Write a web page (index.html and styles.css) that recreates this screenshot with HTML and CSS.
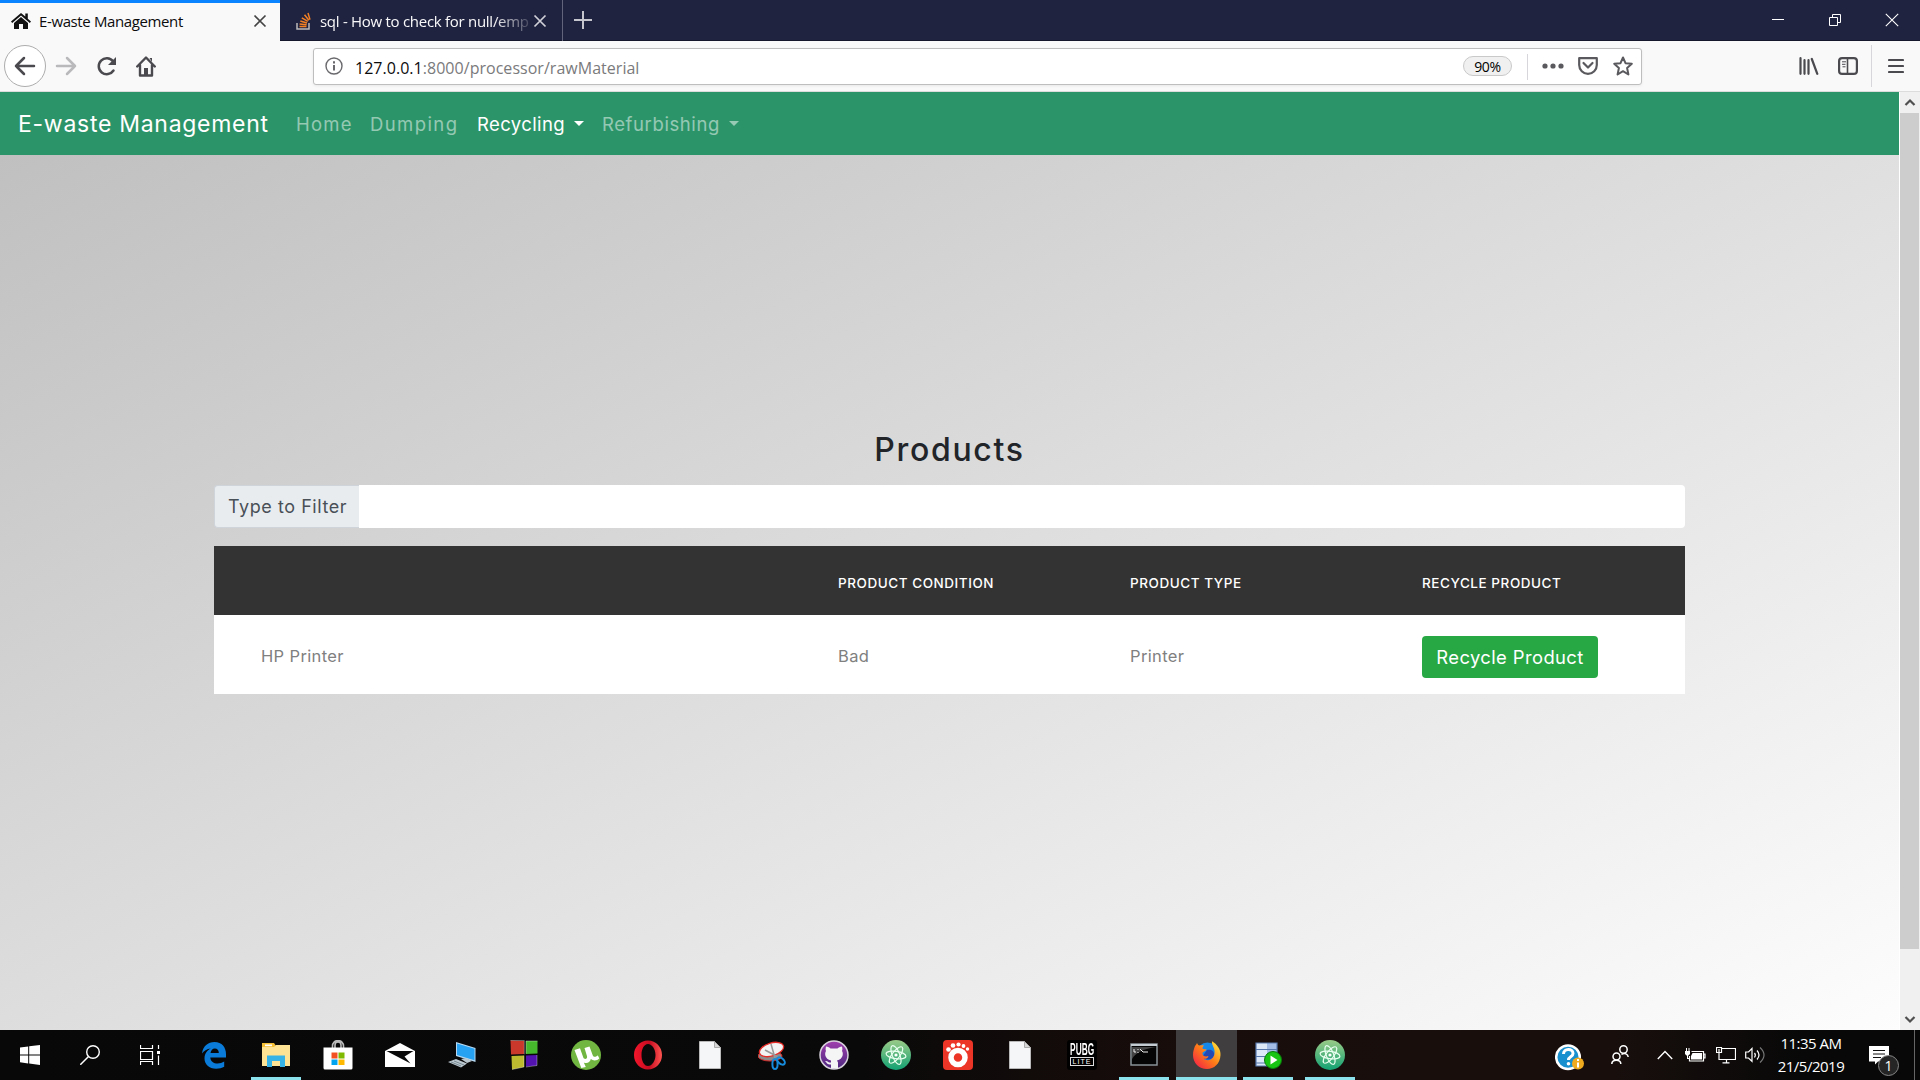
FILE: index.html
```html
<!DOCTYPE html>
<html lang="en">
<head>
<meta charset="utf-8">
<title>E-waste Management</title>
<link rel="stylesheet" href="styles.css">
</head>
<body>
<div class="screen">
  <header class="tabbar">
    <div class="tab tab-active">
      <svg class="tab-icon" width="20" height="18" viewBox="0 0 20 18"><path fill="#111" d="M10 1 0 9.6l1.2 1.3L10 3.4l8.8 7.5L20 9.6l-3.2-2.8V1.5h-2.5v3.1zM3 11v6h5v-5h4v5h5v-6l-7-6z"/></svg>
      <span class="tab-title title-one">E-waste Management</span>
      <svg class="tab-close" width="14" height="14" viewBox="0 0 14 14"><path d="M1.5 1.5l11 11m0-11l-11 11" stroke="#444" stroke-width="1.7"/></svg>
    </div>
    <div class="tab tab-idle">
      <svg class="tab-icon" width="16" height="18" viewBox="0 0 16 18"><path d="M1 11v6h12v-6" fill="none" stroke="#bcbbbb" stroke-width="1.5"/><path d="M3.5 14.5h7M3.6 12l7 .8M4.3 9l6.7 2M5.8 5.8l6 3.6M8.5 2.8l4.4 5.4M12 1l2 6.6" stroke="#f48024" stroke-width="1.5"/></svg>
      <span class="tab-title title-two">sql - How to check for null/emp</span>
      <svg class="tab-close" width="14" height="14" viewBox="0 0 14 14"><path d="M1.5 1.5l11 11m0-11l-11 11" stroke="#d0d0d8" stroke-width="1.7"/></svg>
    </div>
    <svg class="new-tab" width="18" height="18" viewBox="0 0 18 18"><path d="M9 0v18M0 9h18" stroke="#c6c6cf" stroke-width="2"/></svg>
    <div class="window-buttons">
      <svg width="14" height="14" viewBox="0 0 14 14"><path d="M1 6.5h12" stroke="#fff"/></svg>
      <svg width="14" height="14" viewBox="0 0 14 14"><path d="M1.5 4.5h8v8h-8zM4.500 4V1.500h8v8H10" fill="none" stroke="#fff"/></svg>
      <svg width="14" height="14" viewBox="0 0 14 14"><path d="M.8.8l12.400 12.400m0-12.400L.8 13.200" stroke="#fff" stroke-width="1.100"/></svg>
    </div>
  </header>

  <div class="toolbar">
    <div class="back"><svg width="22" height="20" viewBox="0 0 22 20"><path d="M10 2 2 10l8 8M2 10h18" fill="none" stroke="#4a4a4f" stroke-width="2.500" stroke-linecap="round" stroke-linejoin="round"/></svg></div>
    <svg class="tool-forward" width="22" height="20" viewBox="0 0 22 20"><path d="m12 2 8 8-8 8M20 10H2" fill="none" stroke="#b9b9bb" stroke-width="2.500" stroke-linecap="round" stroke-linejoin="round"/></svg>
    <svg class="tool-reload" width="20" height="20" viewBox="0 0 20 20"><path d="M16.500 14.500A8 8 0 1 1 16 5.200" fill="none" stroke="#4a4a4f" stroke-width="2.500" stroke-linecap="round"/><path d="M19 1v8h-8z" fill="#4a4a4f"/></svg>
    <svg class="tool-home" width="20" height="21" viewBox="0 0 20 21"><path d="m1.200 10.500 8.800-9 8.800 9M4 9v10.500h12V9" fill="none" stroke="#4a4a4f" stroke-width="2.400" stroke-linecap="round" stroke-linejoin="round"/><path d="M8 12h4v7H8zM13.500 2h2.500v4z" fill="#4a4a4f"/></svg>
    <div class="urlbar">
      <svg class="info" width="18" height="18" viewBox="0 0 18 18"><circle cx="9" cy="9" r="8" fill="none" stroke="#6a6a6e" stroke-width="1.400"/><path d="M9 8v5.500M9 4.300v2.200" stroke="#6a6a6e" stroke-width="2"/></svg>
      <span class="url"><b>127.0.0.1</b>:8000/processor/rawMaterial</span>
      <span class="zoom-level">90%</span>
      <span class="url-divider"></span>
      <svg class="dots" width="22" height="6" viewBox="0 0 22 6"><g fill="#5a5a5e"><circle cx="3" cy="3" r="2.600"/><circle cx="11" cy="3" r="2.600"/><circle cx="19" cy="3" r="2.600"/></g></svg>
      <svg class="pocket" width="20" height="18" viewBox="0 0 20 18"><path d="M1.200 1.200h17.600V8a8.800 8.800 0 0 1-17.600 0z" fill="none" stroke="#5a5a5e" stroke-width="2.200" stroke-linejoin="round"/><path d="m5.500 6 4.500 4.500L14.500 6" fill="none" stroke="#5a5a5e" stroke-width="2.200" stroke-linecap="round" stroke-linejoin="round"/></svg>
      <svg class="star" width="20" height="20" viewBox="0 0 20 20"><path d="m10 1.500 2.500 5.700 6.300.6-4.700 4.200 1.300 6.500L10 15.200l-5.400 3.300L5.900 12 1.200 7.800l6.300-.6z" fill="none" stroke="#5a5a5e" stroke-width="2" stroke-linejoin="round"/></svg>
    </div>
    <div class="tools-right">
      <svg class="library" width="20" height="18" viewBox="0 0 20 18"><path d="M1.500 1.200v15.600M5.500 3.200v13.600M9.500 3.200v13.600M12.800 2l5.500 14.800" stroke="#4a4a4f" stroke-width="2.200" stroke-linecap="round"/></svg>
      <svg class="sidebar-icon" width="20" height="18" viewBox="0 0 20 18"><rect x="1.100" y="1.100" width="17.800" height="15.800" rx="3" fill="none" stroke="#4a4a4f" stroke-width="2.200"/><path d="M9.500 2v14" stroke="#4a4a4f" stroke-width="1.600"/><path d="M4 4.800h4M4 7.300h3.500M4.500 9.800H7.500" stroke="#4a4a4f"/></svg>
      <span class="tools-divider"></span>
      <svg width="16" height="16" viewBox="0 0 16 16"><path d="M1 2h14M1 8h14M1 14h14" stroke="#4a4a4f" stroke-width="2.200" stroke-linecap="round"/></svg>
    </div>
  </div>

  <div class="viewport">
    <div class="page">
      <nav class="navbar">
        <span class="brand">E-waste Management</span>
        <span class="nav-link nav-home">Home</span>
        <span class="nav-link nav-dumping">Dumping</span>
        <span class="nav-link nav-recycling">Recycling</span><i class="caret caret-active"></i>
        <span class="nav-link nav-refurbishing">Refurbishing</span><i class="caret"></i>
      </nav>
      <main class="content">
        <h1><span>Products</span></h1>
        <div class="filter"><label class="filter-label"><span>Type to Filter</span></label><input class="filter-input" type="text"></div>
        <table class="products">
          <thead><tr><th class="col-name"></th><th class="col-mid">PRODUCT CONDITION</th><th class="col-mid">PRODUCT TYPE</th><th>RECYCLE PRODUCT</th></tr></thead>
          <tbody><tr><td class="col-name">HP Printer</td><td>Bad</td><td>Printer</td><td><button class="recycle">Recycle Product</button></td></tr></tbody>
        </table>
      </main>
    </div>
    <div class="scrollbar">
      <svg width="20" height="21" viewBox="0 0 20 21"><path d="m5.500 13 4.500-4.500 4.500 4.500" fill="none" stroke="#505050" stroke-width="2.200"/></svg>
      <div class="thumb"></div>
      <svg class="scroll-down" width="20" height="21" viewBox="0 0 20 21"><path d="m5.500 8 4.500 4.500L14.500 8" fill="none" stroke="#505050" stroke-width="2.200"/></svg>
    </div>
  </div>

  <footer class="taskbar">
    <div class="sys"><svg width="20" height="20" viewBox="0 0 20 20"><path fill="#fff" d="M0 2.600 8.200 1.400v8H0zM9.200 1.300 20 0v9.400H9.200zM0 10.400h8.200v8L0 17.200zM9.200 10.400H20V20L9.200 18.600z"/></svg></div>
    <div class="sys"><svg width="20" height="20" viewBox="0 0 20 20"><circle cx="13" cy="7" r="6.300" fill="none" stroke="#fff" stroke-width="1.400"/><path d="M8.500 11.500.3 19.700" stroke="#fff" stroke-width="1.500"/></svg></div>
    <div class="sys"><svg width="20" height="20" viewBox="0 0 20 20"><path d="M.5 0v3.500h12V0M.5 6.500h12v8H.5zM.5 20v-3.500h12V20M18.500 0v4M18.500 10.500V20" fill="none" stroke="#fff" stroke-width="1.200"/><path d="M17 6h3v3h-3z" fill="#fff"/></svg></div>
    <div class="apps">
      <div class="app"><svg width="26" height="28" viewBox="0 0 26 28"><path fill="#0a7bd8" d="M1 12.500C2 5 7 1 13.500 1 21 1 25 6.500 25 13v3.500H9.300c.3 4 3.500 6 7.200 6 2.500 0 4.700-.7 6.700-1.900v5.100c-2.100 1.300-5 2-8 2C8 27.700 3.500 23.500 3.500 17.500c0-4.500 2.500-8 6.200-9.900C6 8 2.700 10 1 12.500zM9.500 12h8.300c0-3-1.500-4.600-4-4.600-2.300 0-3.800 1.700-4.300 4.600z"/></svg></div>
      <div class="app running"><svg width="28" height="24" viewBox="0 0 28 24"><path fill="#f5bf36" d="M0 0h12l2 3h13v7H0z"/><path fill="#ffe394" d="M0 4h12l2-2h14v21H0z"/><path fill="#fff" d="M3 1.500h7v1.700H3z"/><path fill="#37b3e6" d="M5 24V12.500h18V24h-5v-6h-8v6z"/></svg></div>
      <div class="app"><svg width="30" height="30" viewBox="0 0 30 30"><path d="M9.500 9V6a5.500 5.500 0 0 1 11 0v3M12 8V5a3 3 0 0 1 6 0v3" fill="none" stroke="#bbb" stroke-width="1.600"/><path fill="#fff" d="M.5 7.500h29V28q0 1.500-1.500 1.500H2Q.5 29.500.5 28z"/><path fill="#f25022" d="M8.500 12.500h6v6h-6z"/><path fill="#7fba00" d="M15.500 12.500h6v6h-6z"/><path fill="#00a4ef" d="M8.500 19.500h6v5.500h-6z"/><path fill="#ffb900" d="M15.500 19.500h6v5.500h-6z"/></svg></div>
      <div class="app"><svg width="30" height="26" viewBox="0 0 30 26"><path fill="#fff" d="M0 9 15 1l15 8v16H0z"/><path fill="#0a0a0a" d="M1.500 9h27L19.500 14.500l6 7L1.500 9z"/></svg></div>
      <div class="app"><svg width="28" height="27" viewBox="0 0 28 27"><path fill="#b7d8f0" d="m8 0 19.500 6v14L8 14z"/><path fill="#27a2f2" d="m9 1.500 17.500 5.300v11.500L9 13z"/><path fill="#bcc8d0" d="m13 17 5-1 6 3-5 2zM0 20l8-3 11 4.500-6 4z"/><path d="m3 20 10 4M6 19l10 4" stroke="#788891"/></svg></div>
      <div class="app"><svg width="28" height="30" viewBox="0 0 28 30"><path fill="#c9382a" d="M.5.500 14 1v13L1 14.500z"/><path fill="#45b82c" d="M16 1h11.500v12.500L16 14z"/><path fill="#beba30" d="m1.500 16 12.500-.5V27L2 29.500z"/><path fill="#5213ae" d="M16 15.500 27 15v10.500l-11 1.300z"/><path d="M.5.500h13.800v13.800M16 13.700V1h11.500M14 15.500V27L2 29.500M27 15v10.500L16 27" fill="none" stroke="#fff" stroke-opacity=".35"/></svg></div>
      <div class="app"><svg width="30" height="30" viewBox="0 0 30 30"><circle cx="15" cy="15" r="15" fill="#70b640"/><path fill="#fff" d="M3.500 10 9 8.300l3.300 9.200c1 2.500 4.500 1.500 3.700-1.200L13.500 8l5-1.500 3.300 9c.7 2 3.700 1.500 5-.2l1.500 3.200c-2 2.200-6 2.700-8.500.6-.7 3.400-4.300 4.900-7 3.400l2 4.500-4.500 1z"/></svg></div>
      <div class="app"><svg width="30" height="30" viewBox="0 0 30 30"><defs><linearGradient id="op"><stop stop-color="#f4162b"/><stop offset=".55" stop-color="#c60b20"/><stop offset="1" stop-color="#ff5551"/></linearGradient></defs><path fill="url(#op)" fill-rule="evenodd" d="M15 .5c8 0 14 6.500 14 14.500s-6 14.500-14 14.500S1 23 1 15 7 .5 15 .5zm0 3.500c-4 0-6.500 5-6.500 11S11 26 15 26s7.500-5 7.500-11S19 4 15 4z"/></svg></div>
      <div class="app"><svg width="22" height="28" viewBox="0 0 22 28"><path fill="#f5f6f7" stroke="#b9b9b9" d="M.5.500h15l6 6v21H.5z"/><path fill="#d6d6d6" stroke="#aaa" d="M15.500.500v6h6z"/></svg></div>
      <div class="app"><svg width="28" height="29" viewBox="0 0 28 29"><ellipse cx="12" cy="15" rx="12" ry="5" fill="#8b8b8b" stroke="#d52a27"/><ellipse cx="13.500" cy="8.500" rx="12.500" ry="6.500" transform="rotate(-17 13.500 8.500)" fill="#f3f3f3" stroke="#e52924" stroke-width="1.300"/><path d="m13 3 4 14M7 9l15 8" stroke="#999" stroke-width="1.500"/><ellipse cx="17" cy="23" rx="2.600" ry="5" fill="none" stroke="#168adb" stroke-width="2"/><ellipse cx="23" cy="20" rx="2.800" ry="4.500" transform="rotate(-48 23 20)" fill="none" stroke="#168adb" stroke-width="2"/></svg></div>
      <div class="app"><svg width="30" height="30" viewBox="0 0 30 30"><defs><linearGradient id="gh" x2="0" y2="1"><stop stop-color="#a03fae"/><stop offset="1" stop-color="#4d2880"/></linearGradient></defs><circle cx="15" cy="15" r="14" fill="url(#gh)" stroke="#d8d2dd" stroke-width="1.500"/><path fill="#f5f5f5" d="M7 6.500c2 0 3.500 1 4.500 2h7c1-1 2.500-2 4.500-2 .6 2 .4 3.500 0 4.500 1.500 2 1.500 8-5 9.500l1 2v6h-7v-4c-3 .5-4-1-5-2.500l-1-1c3-.5 3 2 6 1.500v-2C5.500 19 5.500 13 7 11c-.5-1-.5-2.500 0-4.500z"/></svg></div>
      <div class="app"><svg width="30" height="30" viewBox="0 0 30 30"><defs><linearGradient id="at" x2="0" y2="1"><stop stop-color="#9acb87"/><stop offset="1" stop-color="#12a173"/></linearGradient></defs><circle cx="15" cy="15" r="15" fill="url(#at)"/><g fill="none" stroke="#e9fff0" stroke-width="1.200"><ellipse cx="15" cy="15" rx="10" ry="3.700" transform="rotate(8 15 15)"/><ellipse cx="15" cy="15" rx="10" ry="3.700" transform="rotate(68 15 15)"/><ellipse cx="15" cy="15" rx="10" ry="3.700" transform="rotate(128 15 15)"/></g><circle cx="15" cy="15" r="1.600" fill="#fff"/></svg></div>
      <div class="app"><svg width="30" height="30" viewBox="0 0 30 30"><rect width="30" height="30" rx="4" fill="#ed3527"/><circle cx="15" cy="17.500" r="7" fill="none" stroke="#fff" stroke-width="5.500"/><g fill="#fff"><circle cx="5.500" cy="9.500" r="2.300"/><circle cx="10" cy="5.500" r="2.300"/><circle cx="15.500" cy="4.500" r="2.100"/><circle cx="20.500" cy="6" r="1.900"/><circle cx="24.500" cy="9" r="1.700"/></g></svg></div>
      <div class="app"><svg width="22" height="28" viewBox="0 0 22 28"><path fill="#f5f6f7" stroke="#b9b9b9" d="M.5.500h15l6 6v21H.5z"/><path fill="#d6d6d6" stroke="#aaa" d="M15.500.500v6h6z"/></svg></div>
      <div class="app"><div class="pubg"><b>PUBG</b><i>LITE</i></div></div>
      <div class="app running"><svg width="28" height="24" viewBox="0 0 28 24"><path fill="#050505" stroke="#879197" stroke-width="1.500" d="M1 1h26v21H1z"/><path fill="#444" d="M2 4h24c-12 2-20 5-24 12z"/><path fill="#c5cdd2" d="M1 1h26v2H1z"/><path d="M4 6v3h2M8 6v1M8 9v1M10 6l3 3h5" fill="none" stroke="#eee"/></svg></div>
      <div class="app running focused"><svg width="28" height="28" viewBox="0 0 28 28"><defs><linearGradient id="fx" x1="0" y1="1" x2="1" y2="0"><stop stop-color="#f3124f"/><stop offset=".5" stop-color="#ff7b18"/><stop offset="1" stop-color="#fff33e"/></linearGradient></defs><circle cx="14.500" cy="12" r="10.500" fill="#1688e8"/><path fill="#2448b4" d="M14 9c5-1 8 2 7 6s-8 5-12 1z"/><path fill="url(#fx)" d="M2 5c1-1 1.500-2 2-3 1 2 1.500 2.300 2.500 2.600C8 4 10 4 11 4.500c-1 1-1.600 2-1.500 3 1 1 3 .5 4 1-1 2-4 2-4 4 0 3 3.500 3.500 6 2.500-1 3-3 3-5 2.800 6 4 12-1 11-8-.5-4-3-6-2.500-9.500 5 3 9 8 8.500 14C27 23 21 28 14 28 6 28 0 22 0 14c0-4 1-6 2-9z"/></svg></div>
      <div class="app running"><svg width="27" height="27" viewBox="0 0 27 27"><path fill="#dce7f7" d="M1 1h21v23H1z"/><path fill="#a3bce5" d="M12 1h10v23H12z"/><path d="M1 7.500h21M1 14.500h21M1 21h10M1 1h21v23H1z" fill="none" stroke="#5778ad" stroke-width="1.200"/><circle cx="18" cy="18" r="8.500" fill="#18c514" stroke="#087b0a"/><path fill="#fff" d="m15.500 13.500 7 4.500-7 4.500z"/></svg></div>
      <div class="app running"><svg width="30" height="30" viewBox="0 0 30 30"><circle cx="15" cy="15" r="15" fill="url(#at)"/><g fill="none" stroke="#e9fff0" stroke-width="1.200"><ellipse cx="15" cy="15" rx="10" ry="3.700" transform="rotate(8 15 15)"/><ellipse cx="15" cy="15" rx="10" ry="3.700" transform="rotate(68 15 15)"/><ellipse cx="15" cy="15" rx="10" ry="3.700" transform="rotate(128 15 15)"/></g><circle cx="15" cy="15" r="1.600" fill="#fff"/></svg></div>
    </div>
    <div class="tray">
      <div class="help"><svg width="29" height="27" viewBox="0 0 29 27"><circle cx="13" cy="13.300" r="11.800" fill="#188fce" stroke="#fff" stroke-width="2.500"/><path d="M8.500 10c0-6 9.500-6 9.500-.5 0 3.500-4.500 3.200-4.500 6.500" fill="none" stroke="#fff" stroke-width="3"/><circle cx="13.500" cy="19.700" r="1.800" fill="#fff"/><circle cx="23" cy="19.500" r="6" fill="#f0aa1e"/><path d="M23 18.500v5M23 15v2" stroke="#fff" stroke-width="2"/></svg></div>
      <svg class="people" width="18" height="20" viewBox="0 0 18 20"><g fill="none" stroke="#fff" stroke-width="1.500"><circle cx="12.500" cy="4.500" r="3.700"/><circle cx="5.500" cy="11.500" r="3.500"/><path d="M.8 19c0-5 9-5 9 0M10.500 9.500c3-2 6.500-.5 6.700 2.500"/></g></svg>
      <svg class="up" width="16" height="10" viewBox="0 0 16 10"><path d="m.8 9 7.200-7.500L15.200 9" fill="none" stroke="#fff" stroke-width="1.400"/></svg>
      <svg class="battery" width="21" height="15" viewBox="0 0 21 15"><path d="M6.500 3.500h12v9.500H4.500V8M18.500 6h1.500v4h-1.500" fill="none" stroke="#fff" stroke-width="1.200"/><path fill="#fff" d="M7.500 5h9.500v6.500H6V8zM0 3h5v3l-1.500 1.500h-2L0 6zM1 0h1v3H1zM3.500 0h1v3h-1zM2 7h1v3h1.500v1H2z"/></svg>
      <svg class="network" width="20" height="17" viewBox="0 0 20 17"><path d="M5 1.500h14.500v11H3V6M10.500 12.500V16M6.500 15.800h7M.5.500h5v5h-5zM3 2v4" fill="none" stroke="#fff" stroke-width="1.200"/></svg>
      <svg class="sound" width="20" height="18" viewBox="0 0 20 18"><path d="M.7 6h2.800L7 2.500v12.800L3.500 12H.7zM9.500 7q1.700 2 0 4.500M12 4.500q4 4.500 0 9" fill="none" stroke="#fff" stroke-width="1.200"/><path d="M15 1.500q8 7.500 0 15" fill="none" stroke="#777" stroke-width="1.200"/></svg>
      <div class="clock"><span>11:35 AM</span><span>21/5/2019</span></div>
      <div class="notice"><svg width="20" height="19" viewBox="0 0 20 19"><path fill="#fff" d="M0 0h20v15.500H9L6 18.500v-3H0z"/><path d="M4 4.500h12M4 8h12M4 11.500h8" stroke="#111"/></svg><span class="count">1</span></div>
      <span class="show-desktop"></span>
    </div>
  </footer>
</div>
</body>
</html>
```
FILE: styles.css
```css
* { box-sizing: border-box; }
body { margin: 0; overflow: hidden; font-family: "Open Sans", sans-serif; }
svg { display: block; flex: none; }
.screen { width: 1920px; height: 1080px; display: flex; flex-direction: column; overflow: hidden; }

.tabbar { height: 41px; flex: none; display: flex; align-items: center; background: #202340; border-bottom: 1px solid #15172d; }
.tab { height: 41px; flex: none; display: flex; align-items: center; font-size: 15px; white-space: nowrap; }
.tab-active { width: 280px; padding: 3px 13px 0 11px; background: #f9f9fa; border-top: 3px solid #0a84ff; color: #0c0c0d; }
.tab-active .tab-title { margin: -4px 0 0 8px; }
.tab-active svg { margin-top: -4px; }
.tab-idle { width: 283px; padding: 2px 15px 0 16px; border-right: 1px solid #62647b; color: #f9f9fa; }
.tab-idle .tab-title { width: 214px; margin-left: 8px; -webkit-mask-image: linear-gradient(90deg, #000 82%, #0003 98%); mask-image: linear-gradient(90deg, #000 82%, #0003 98%); }
.tab-close { margin-left: auto; }
.tab-idle .tab-close { margin-left: 1px; }
.title-one { letter-spacing: -.38px; }
.title-two { letter-spacing: -.28px; }
.new-tab { margin-left: 11px; }
.window-buttons { margin-left: auto; display: flex; gap: 43px; padding-right: 21px; }

.toolbar { height: 51px; flex: none; display: flex; align-items: center; background: #f9f9fa; border-bottom: 1px solid #dcdcdc; }
.back { width: 42px; height: 42px; margin-left: 4px; flex: none; display: grid; place-items: center; border: 1px solid #adadae; border-radius: 50%; background: #fff; }
.tool-forward { margin-left: 9px; }
.tool-reload { margin-left: 20px; }
.tool-home { margin-left: 19px; }
.urlbar { width: 1329px; height: 37px; margin-left: 157px; flex: none; display: flex; align-items: center; padding-left: 11px; background: #fff; border: 1px solid #bebebe; border-radius: 3px; box-shadow: 0 1px 3px #0001; }
.url { margin: 3px 0 0 12px; font-size: 16px; color: #7a7a7c; white-space: nowrap; letter-spacing: .03px; }
.url b { font-weight: 400; color: #0c0c0d; }
.zoom-level { width: 49px; height: 20px; margin-left: auto; border: 1px solid #c9c9c9; border-radius: 10px; background: #f0f0f1; font-size: 14px; line-height: 19px; text-align: center; letter-spacing: -.3px; }
.url-divider { width: 1px; height: 26px; margin: 2px 0 0 15px; background: #d7d7db; }
.dots { margin-left: 14px; }
.pocket { margin-left: 14px; }
.star { margin: 0 8px 0 15px; }
.tools-right { margin-left: auto; display: flex; align-items: center; padding-right: 16px; }
.sidebar-icon { margin-left: 19px; }
.tools-divider { width: 1px; height: 42px; margin: 0 16px 0 13px; background: #d7d7db; }

.viewport { height: 938px; flex: none; display: flex; overflow: hidden; }
.page { width: 1899px; flex: none; font-family: Inter, sans-serif; }
.navbar { height: 63px; padding-left: 18px; display: flex; align-items: center; background: #2c9469; color: #fff; white-space: nowrap; }
.brand { width: 278px; font-size: 23px; letter-spacing: .72px; }
.nav-link { font-size: 18.500px; color: #ffffff80; letter-spacing: .55px; }
.nav-home { width: 74px; letter-spacing: 1.2px; }
.nav-dumping { width: 107px; letter-spacing: 1.400px; }
.nav-recycling { width: 97px; color: #fff; letter-spacing: .4px; }
.nav-refurbishing { width: 127px; margin-left: 18px; letter-spacing: .6px; }
.caret { border: 5px solid transparent; border-top-color: #ffffff80; border-bottom: 0; }
.caret-active { border-top-color: #fff; }
.content { height: 938px; padding: 271px 214px 0; background: linear-gradient(to bottom right, #c0c0c0, #fff); }
h1 { height: 59px; margin: 0; padding-top: 4px; color: #212529; font-size: 32px; line-height: 39px; font-weight: 500; text-align: center; }
h1 span { letter-spacing: 1.700px; }
.filter { height: 43px; display: flex; margin-bottom: 18px; }
.filter-label { width: 145px; display: flex; align-items: center; padding-left: 13px; color: #495057; background: #e9ecef; border: 1px solid #ced4da; border-right: 0; border-radius: 4px 0 0 4px; font-size: 18px; letter-spacing: .55px; white-space: nowrap; }
.filter-input { flex: 1; border: 0; border-radius: 0 4px 4px 0; background: #fff; padding: 0 13px; }
.products { width: 1471px; table-layout: fixed; border-collapse: collapse; background: #fff; }
.products th { height: 69px; padding: 4px 0 0; background: #333; color: #fff; font-size: 13.500px; font-weight: 500; text-align: left; letter-spacing: .55px; }
.products td { height: 79px; padding: 3px 0 0; color: #808080; font-size: 16.500px; letter-spacing: .35px; }
.products .col-name { width: 624px; padding-left: 47px; }
.products .col-mid { width: 292px; }
.recycle { width: 176px; height: 42px; display: block; margin-top: 1px; padding: 0; border: 0; border-radius: 4px; background: #28a745; color: #fff; font: 18.400px Inter, sans-serif; letter-spacing: .4px; white-space: nowrap; }
.scrollbar { width: 21px; display: flex; flex-direction: column; background: #f0f0f0; border-left: 1px solid #fff; }
.thumb { width: 19px; height: 836px; background: #cdcdcd; }
.scroll-down { margin-top: auto; }

.taskbar { height: 50px; flex: none; display: flex; background: linear-gradient(90deg, #080808 0%, #0a0909 45%, #180d0b 62%, #180f0d 84%, #080808 94%); color: #fff; }
.sys { width: 60px; display: grid; place-items: center; }
.apps { display: flex; margin-left: 3px; }
.app { width: 62px; height: 50px; display: grid; place-items: center; border: 0 solid transparent; border-width: 0 6px; }
.running { background: linear-gradient(#8be2ed, #8be2ed) bottom / 100% 3px no-repeat padding-box; }
.focused { border-width: 0; background-color: #403e3e; background-clip: padding-box; margin-left: 1px; width: 61px; }
.pubg { width: 30px; height: 30px; display: flex; flex-direction: column; align-items: center; background: #000; border-radius: 3px; font-family: "Liberation Sans", sans-serif; }
.pubg b { height: 17px; font-size: 16px; line-height: 20px; transform: scaleX(.52); }
.pubg i { width: 24px; height: 9px; border: 1px solid #ddd; font-size: 7px; line-height: 8px; text-align: center; font-style: normal; letter-spacing: 1px; }
.tray { margin-left: auto; display: flex; align-items: center; height: 50px; }
.help { padding-top: 4px; }
.people { margin-left: 27px; }
.up { margin-left: 28px; }
.battery { margin-left: 12px; }
.network { margin-left: 10px; }
.sound { margin-left: 9px; }
.clock { width: 74px; margin-left: 9px; display: flex; flex-direction: column; font-size: 15px; line-height: 23px; text-align: center; letter-spacing: -.5px; margin-top: -1px; white-space: nowrap; }
.notice { position: relative; width: 30px; height: 31px; margin: 10px 0 0 21px; padding-top: 1px; }
.count { position: absolute; left: 9px; top: 10px; width: 21px; height: 21px; border: 1px solid #888; border-radius: 50%; background: #252525; font-size: 14px; line-height: 19px; text-align: center; }
.show-desktop { width: 1px; height: 50px; margin: 0 5px 0 15px; background: #666; }
```
